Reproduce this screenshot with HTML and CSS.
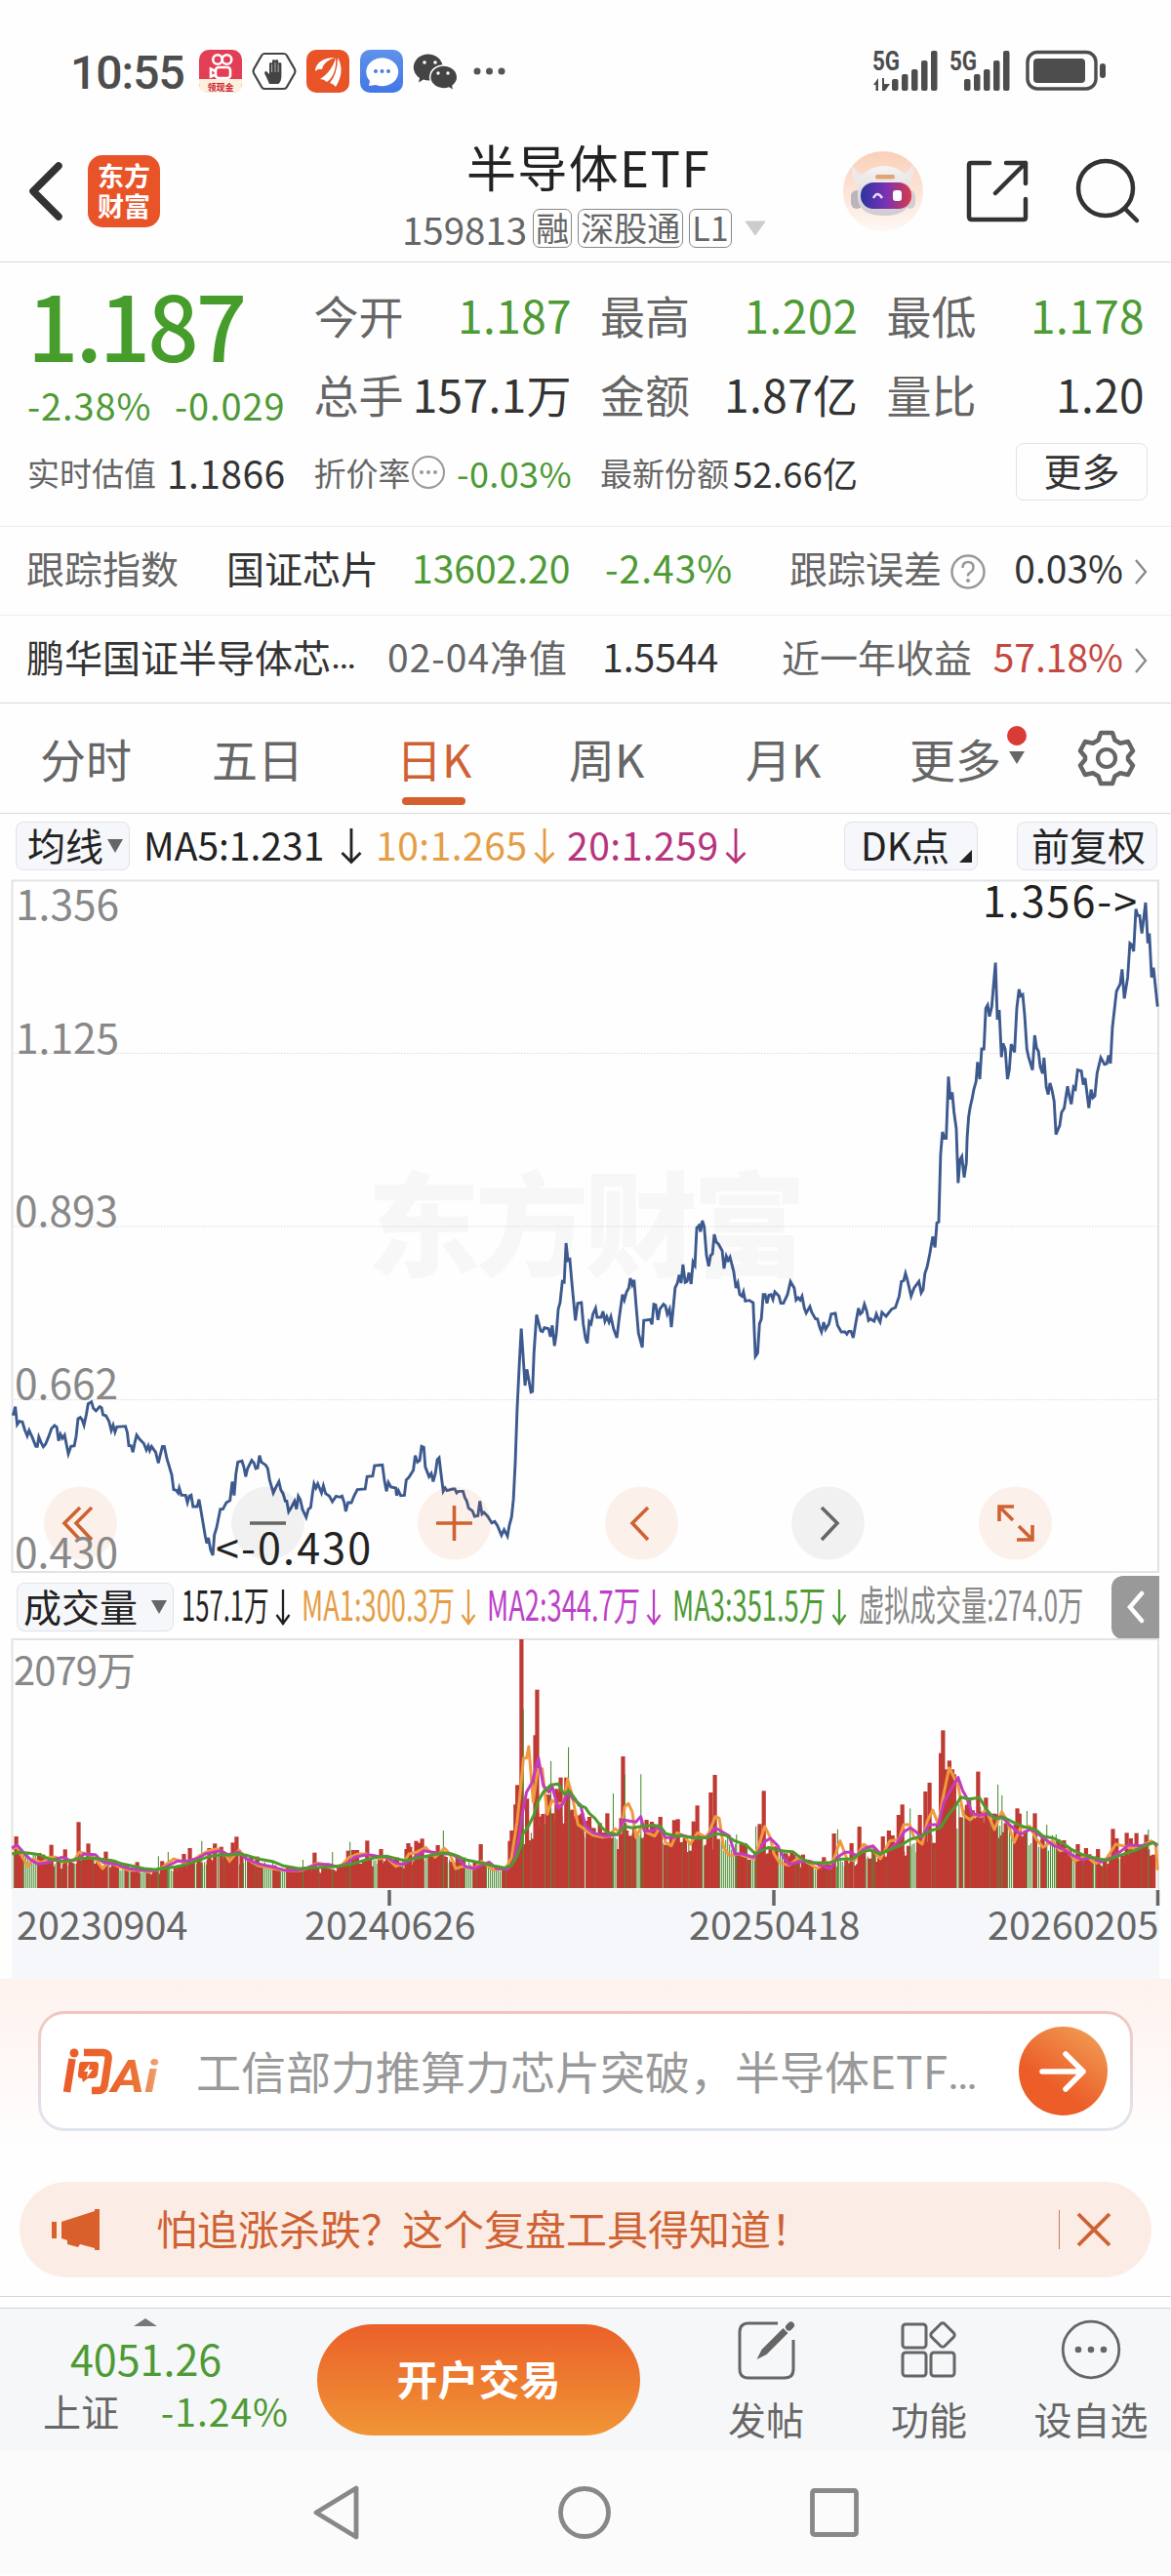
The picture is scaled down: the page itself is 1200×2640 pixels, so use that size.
FILE: index.html
```html
<!DOCTYPE html>
<html lang="zh-CN">
	<head>
		<meta charset="UTF-8">
		<title>半导体ETF</title>
		<link rel="stylesheet" href="styles.css">
	</head>
	<body>
		<div class="status">
			<div class="clock">10:55</div>
			<svg class="apps" width="330" height="50" viewBox="200 48 330 50">
				<defs>
					<linearGradient id="blue" x1="0" y1="0" x2="0" y2="1"><stop offset="0" stop-color="#5e92ea"/><stop offset="1" stop-color="#4377e6"/></linearGradient>
				</defs>
				<rect x="204" y="51" width="44" height="44" rx="10" fill="#e23e55"/>
				<path d="M204 81h44v4q0 10-10 10h-24q-10 0-10-10z" fill="#fdf0dc"/>
				<g fill="none" stroke="#fff" stroke-width="2.6">
					<circle cx="223" cy="61" r="4.8"/><circle cx="232.500" cy="61" r="4.800"/>
					<rect x="221" y="69" width="15" height="11" rx="3"/><path d="M221 73l-5-2.500v8l5-2"/>
				</g>
				<text x="226" y="93" font-size="9" font-weight="700" text-anchor="middle" fill="#c23">领现金</text>
				<path d="M271 55h20q2 0 3 2l8 14q1 2 0 4l-8 14q-1 2-3 2h-20q-2 0-3-2l-8-14q-1-2 0-4l8-14q1-2 3-2z" fill="none" stroke="#444" stroke-width="2.200"/>
				<path d="M276 86q-2-5-5-11q0-2 2-2l3 3V65q1.500-2 3 0v8V62q1.500-2 3 0v11V62q1.700-2 3.200 0v11V65q1.700-2 3.200 0v13q0 5-3 8z" fill="#444"/>
				<path d="M278.600 66v8M282 64v10M285.200 66v8" stroke="#fefefe" stroke-width=".6"/>
				<rect x="314" y="51" width="44" height="44" rx="10" fill="#e95328"/>
				<g fill="#fff">
					<path d="M323 73c0-8 8-14 20-14c-8 3-12 7-13 12q-4-1-7 2z"/>
					<path d="M328 81c8-5 14-13 16-22c1 10-2 20-9 25q-3-3-7-3z"/>
					<path d="M338 85q8-10 8-26q8 14-2 30q-2-3-6-4z"/>
				</g>
				<rect x="369" y="51" width="44" height="44" rx="10" fill="url(#blue)"/>
				<path d="M379 83a16.500 14.500 0 1 1 6 4l-7 1z" fill="#fff"/>
				<g fill="#4a7de6"><circle cx="385" cy="73" r="2"/><circle cx="391.500" cy="73" r="2"/><circle cx="398" cy="73" r="2"/></g>
				<path d="M430 80a15 13.500 0 1 1 10 2.500q-4 0-6-1l-5 3z" fill="#444"/>
				<circle cx="435" cy="64" r="1.800" fill="#fff"/><circle cx="446" cy="64" r="1.800" fill="#fff"/>
				<path d="M464 88a14 12 0 1 0-9 3q3 0 5-1l5 3z" fill="#444" stroke="#fff" stroke-width="1.500"/>
				<circle cx="449" cy="75" r="1.700" fill="#fff"/><circle cx="459" cy="75" r="1.700" fill="#fff"/>
				<g fill="#555"><circle cx="489" cy="73" r="3.500"/><circle cx="501.500" cy="73" r="3.500"/><circle cx="514" cy="73" r="3.500"/></g>
			</svg>
			<svg class="signal" width="250" height="60" viewBox="890 43 250 60" fill="#4d4d4d">
				<text class="net" transform="translate(894 72) scale(.8 1)">5G</text>
				<path d="M895 87l5-7v13h-2.500v-6zM904 80h2v6h6l-5 7h-3z"/>
				<rect x="914" y="81" width="6.500" height="12" rx="2"/><rect x="924" y="76" width="6.500" height="17" rx="2"/><rect x="934" y="71" width="6.500" height="22" rx="2"/><rect x="944" y="62" width="6.500" height="31" rx="2"/><rect x="954" y="52" width="6.500" height="41" rx="2"/>
				<text class="net" transform="translate(973 72) scale(.8 1)">5G</text>
				<rect x="988" y="81" width="6.500" height="12" rx="2"/><rect x="998" y="76" width="6.500" height="17" rx="2"/><rect x="1008" y="71" width="6.500" height="22" rx="2"/><rect x="1018" y="62" width="6.500" height="31" rx="2"/><rect x="1028" y="52" width="6.500" height="41" rx="2"/>
				<rect x="1053" y="53.500" width="70" height="37.500" rx="10" fill="none" stroke="#4d4d4d" stroke-width="3.400"/>
				<rect x="1059" y="60" width="53" height="25" rx="4"/><rect x="1127" y="65" width="6" height="15" rx="3"/>
			</svg>
		</div>

		<div class="header">
			<svg class="back" width="40" height="64" viewBox="27 164 40 64"><path d="M60 170L34 196l26 26" fill="none" stroke="#333" stroke-width="7.500" stroke-linecap="round" stroke-linejoin="round"/></svg>
			<div class="logo">东方<br>财富</div>
			<div class="name">
				<div class="nametop">半导体ETF</div>
				<div class="code">159813<i>融</i><i>深股通</i><i>L1</i><svg width="24" height="16" viewBox="0 0 24 16"><path d="M2 1h20L12 15z" fill="#ccc" stroke="#ccc" stroke-linejoin="round"/></svg></div>
			</div>
			<svg class="tools" width="310" height="90" viewBox="860 151 310 90">
				<defs>
					<linearGradient id="peach" x1="0" y1="0" x2="0" y2="1"><stop offset="0" stop-color="#fad0b8"/><stop offset="1" stop-color="#fef8f4"/></linearGradient>
					<linearGradient id="visor"><stop offset="0" stop-color="#2b349f"/><stop offset=".5" stop-color="#7a32b4"/><stop offset="1" stop-color="#d83a48"/></linearGradient>
					<linearGradient id="helmet" x1="0" y1="0" x2="0" y2="1"><stop offset="0" stop-color="#f6f4f4"/><stop offset="1" stop-color="#cfcacf"/></linearGradient>
				</defs>
				<circle cx="905" cy="196" r="41" fill="url(#peach)"/>
				<path d="M874 169q-4 14 6 20l7-10q-10 0-13-10zM935 168q4 14-6 21l-7-10q11-2 13-11z" fill="#eee8e9"/>
				<rect x="872" y="195" width="12" height="19" rx="6" fill="#b9b5ba"/><rect x="927" y="195" width="11" height="19" rx="6" fill="#d2cdd2"/>
				<path d="M879 205q-2-34 27-35q29 1 27 35q-3 16-27 16t-27-16z" fill="url(#helmet)"/>
				<rect x="897" y="179" width="20" height="4.500" rx="2" fill="#dfa673"/>
				<rect x="882" y="187" width="52" height="27" rx="13" fill="url(#visor)"/>
				<path d="M895 203q4-8 9 0" fill="none" stroke="#e9d8ff" stroke-width="2.500"/><rect x="915" y="195" width="9" height="11" rx="3" fill="#fff"/>
				<g fill="none" stroke="#333" stroke-width="4.500" stroke-linecap="round" stroke-linejoin="round">
					<path d="M1014 167h-19q-2 0-2 2v53q0 3 3 3h53q2 0 2-2v-19M1031 167h20v21M1051 167l-31 31"/>
					<circle cx="1133" cy="193" r="28"/><path d="M1153 214l12 12"/>
				</g>
			</svg>
		</div>

		<div class="quote">
			<div class="col">
				<div class="price">1.187</div>
				<div class="change"><span>-2.38%</span><span>-0.029</span></div>
				<div class="cell small"><label>实时估值</label><b class="n39">1.1866</b></div>
			</div>
			<div class="col">
				<div class="cell"><label>今开</label><b class="down">1.187</b></div>
				<div class="cell"><label>总手</label><b>157.1万</b></div>
				<div class="cell small"><label>折价率<svg width="36" height="36" viewBox="0 0 36 36"><circle cx="18" cy="18" r="16" fill="none" stroke="#999" stroke-width="2"/><g fill="#999"><circle cx="11" cy="18" r="2"/><circle cx="18" cy="18" r="2"/><circle cx="25" cy="18" r="2"/></g></svg></label><b class="down">-0.03%</b></div>
			</div>
			<div class="col">
				<div class="cell"><label>最高</label><b class="down">1.202</b></div>
				<div class="cell"><label>金额</label><b>1.87亿</b></div>
				<div class="cell small"><label>最新份额</label><b>52.66亿</b></div>
			</div>
			<div class="col">
				<div class="cell"><label>最低</label><b class="down">1.178</b></div>
				<div class="cell"><label>量比</label><b>1.20</b></div>
				<div class="cell last"><div class="morebtn">更多</div></div>
			</div>
		</div>

		<div class="index row1">
			<span class="grey">跟踪指数</span><span>国证芯片</span><span class="down">13602.20</span><span class="down sp">-2.43%</span>
			<span class="grey">跟踪误差<svg width="38" height="38" viewBox="0 0 38 38"><circle cx="19" cy="19" r="16.500" fill="none" stroke="#999" stroke-width="2.500"/><path d="M13.500 15q0-6 5.500-6t5.500 5.500q0 3-3 5t-2.500 4" fill="none" stroke="#999" stroke-width="2.500"/><circle cx="19" cy="28" r="2" fill="#999"/></svg></span>
			<span class="end">0.03%</span>
			<svg width="14" height="28" viewBox="0 0 14 28"><path d="M2 2l10 12L2 26" fill="none" stroke="#888" stroke-width="2.300"/></svg>
		</div>
		<div class="index row2">
			<span>鹏华国证半导体芯<u>…</u></span><span class="grey sp">02-04净值</span><span>1.5544</span><span class="grey">近一年收益</span><span class="end up">57.18%</span>
			<svg width="14" height="28" viewBox="0 0 14 28"><path d="M2 2l10 12L2 26" fill="none" stroke="#888" stroke-width="2.300"/></svg>
		</div>

		<div class="tabs">
			<div>分时</div><div>五日</div><div class="on">日K</div><div>周K</div><div>月K</div>
			<div class="moretab">更多<em></em><s></s></div>
			<svg width="60" height="68" viewBox="-30 -34 60 68"><path fill="none" stroke="#666" stroke-width="4.500" stroke-linejoin="round" d="M-6-26h12l2.500 7.500l5.500 3.200l8-1.700l5 9.500l-5 6v3l5 6l-5 9.500l-8-1.700l-5.500 3.200l-2.500 7.500h-12l-2.500-7.500l-5.500-3.200l-8 1.700l-5-9.500l5-6v-3l-5-6l5-9.500l8 1.700l5.500-3.200z"/><circle cy="0" r="9" fill="none" stroke="#666" stroke-width="4.200"/></svg>
		</div>

		<div class="maline">
			<div class="chip">均线<svg width="16" height="14"><path d="M0 0h16L8 14z" fill="#666"/></svg></div>
			<span class="ma5">MA5:1.231</span><svg class="arr" width="22" height="38" viewBox="0 0 22 38"><path d="M11 1v34M1.500 26l9.500 9.500l9.500-9.500" fill="none" stroke="#222" stroke-width="2.800"/></svg>
			<span class="ma10">10:1.265</span><svg class="arr" width="22" height="38" viewBox="0 0 22 38"><path d="M11 1v34M1.500 26l9.500 9.500l9.500-9.500" fill="none" stroke="#e59d45" stroke-width="2.800"/></svg>
			<span class="ma20">20:1.259</span><svg class="arr" width="22" height="38" viewBox="0 0 22 38"><path d="M11 1v34M1.500 26l9.500 9.500l9.500-9.500" fill="none" stroke="#b7347c" stroke-width="2.800"/></svg>
			<div class="chip dk">DK点<svg width="13" height="13"><path d="M13 0v13H0z" fill="#222"/></svg></div>
			<div class="chip fq">前复权</div>
		</div>

		<svg class="kchart" width="1200" height="716" viewBox="0 900 1200 716">
			<text class="mark" x="376" y="1299" textLength="450">东方财富</text>
			<path d="M12 1079.500H1188M12 1257H1188M12 1434.500H1188" stroke="#dcdcdc" stroke-width="1.200" stroke-dasharray="1.500 1.500"/>
			<path d="M12.500 902.500H1187V1611H12.500z" fill="none" stroke="#e3e3e5" stroke-width="2"/>
			<g class="axis"><text x="16" y="943">1.356</text><text x="16" y="1080">1.125</text><text x="15" y="1257">0.893</text><text x="15" y="1434">0.662</text></g>
			<g id="closeline" class="closeline" transform="translate(0 1170) scale(.38265 .33333)"></g>
			<g fill="#ee6a20" fill-opacity=".09"><circle cx="82.500" cy="1561" r="37.500"/><circle cx="465.500" cy="1561" r="37.500"/><circle cx="657.500" cy="1561" r="37.500"/><circle cx="1040.500" cy="1561" r="37.500"/></g>
			<g fill="#000" fill-opacity=".05"><circle cx="274.500" cy="1561" r="37.500"/><circle cx="848.500" cy="1561" r="37.500"/></g>
			<g fill="none" stroke="#cf6233" stroke-width="3.600">
				<path d="M82 1545l-16 16l16 17M94 1545l-16 16l16 17M465.500 1543v36M447 1561h37M664 1545l-16 16l16 17"/>
				<path d="M1024 1559v-15h15M1024 1544l14 14M1058 1563v15h-16M1058 1578l-14-14"/>
			</g>
			<path d="M256 1561h37M842 1545l16 16l-16 17" fill="none" stroke="#666" stroke-width="3.600"/>
			<text class="axis" x="15" y="1607">0.430</text>
			<g class="peak"><text x="1007" y="940" textLength="158">1.356-&gt;</text><text x="221" y="1603" textLength="159">&lt;-0.430</text></g>
		</svg>

		<div class="volhead">
			<div class="chip">成交量<svg width="16" height="14"><path d="M0 0h16L8 14z" fill="#666"/></svg></div>
			<svg class="volma" width="930" height="62" viewBox="185 1614 930 62">
				<text fill="#222" transform="translate(186 1659) scale(.61 1)">157.1万</text>
				<text fill="#e59d45" transform="translate(309 1659) scale(.65 1)">MA1:300.3万</text>
				<text fill="#bd40c8" transform="translate(499 1659) scale(.65 1)">MA2:344.7万</text>
				<text fill="#4e9a35" transform="translate(689 1659) scale(.65 1)">MA3:351.5万</text>
				<text fill="#888" transform="translate(880 1659) scale(.625 1)">虚拟成交量:274.0万</text>
				<g fill="none" stroke-width="2.300">
					<path d="M290 1627v36M283.500 1653l6.500 9l6.500-9" stroke="#222"/>
					<path d="M480 1627v36M473.500 1653l6.500 9l6.500-9" stroke="#e59d45"/>
					<path d="M670 1627v36M663.500 1653l6.500 9l6.500-9" stroke="#bd40c8"/>
					<path d="M860 1627v36M853.500 1653l6.500 9l6.500-9" stroke="#4e9a35"/>
				</g>
			</svg>
			<div class="fold"><svg width="20" height="34" viewBox="0 0 20 34"><path d="M16 3L4 17l12 14" fill="none" stroke="#fff" stroke-width="4.500" stroke-linecap="round"/></svg></div>
		</div>

		<svg class="vchart" width="1200" height="350" viewBox="0 1678 1200 350">
			<rect x="12" y="1936" width="1176" height="92" fill="#f6f7fa"/>
			<path d="M12.500 1936V1680H1187V1936" fill="none" stroke="#e3e3e5" stroke-width="2"/>
			<text class="vmax" x="14" y="1727" textLength="125">2079万</text>
			<g id="volume" transform="translate(0 1670) scale(.38265 .33333)"></g>
			<path d="M399 1937v16M793 1937v16M1186.500 1937v16" stroke="#666" stroke-width="3.500"/>
			<g class="dates"><text x="17" y="1988">20230904</text><text x="312" y="1988">20240626</text><text x="706" y="1988">20250418</text><text x="1012" y="1988">20260205</text></g>
		</svg>

		<div class="ai">
			<div class="aibox">
				<svg width="110" height="60" viewBox="62 2093 110 60">
					<defs>
						<linearGradient id="org" x1="62" x2="172" y1="0" y2="0" gradientUnits="userSpaceOnUse"><stop offset="0" stop-color="#ea5a28"/><stop offset=".6" stop-color="#ec6a30"/><stop offset="1" stop-color="#eea77c"/></linearGradient>
						<linearGradient id="org2"><stop offset="0" stop-color="#ea5f2a"/><stop offset=".6" stop-color="#ec7638"/><stop offset="1" stop-color="#eea77c"/></linearGradient>
					</defs>
					<path d="M74 2110l-5.500 34M86 2103.500h19q7 0 6 7l-4 27q-1 5-6 5h-7" fill="none" stroke="url(#org)" stroke-width="7.500"/>
					<circle cx="76" cy="2104" r="4.500" fill="url(#org)"/>
					<path d="M84 2113h13q5 0 4 5l-1 8q-1 4-5 4h-5l-5 4l-1-4q-5 0-4-5l1-8q0-4 3-4z" fill="url(#org)"/>
					<path d="M92 2115l-6 8h4l-1 6l6-8h-4z" fill="#fff"/>
					<text class="ailogo" transform="translate(114 2144) scale(1.14 1)" fill="url(#org2)">Ai</text>
				</svg>
				<p>工信部力推算力芯片突破，半导体ETF<u>…</u></p>
				<div class="go"><svg width="50" height="44" viewBox="0 0 50 44"><path d="M3 22h42M27 4l18 18l-18 18" fill="none" stroke="#fff" stroke-width="5.500" stroke-linecap="round" stroke-linejoin="round"/></svg></div>
			</div>
		</div>

		<div class="notice">
			<svg width="50" height="44" viewBox="53 2263 50 44" fill="#d9602a"><path d="M53 2277h5v17h-5zM63 2277l34-11v-2h5v42h-5v-2l-15-4l-2 3l-11-3v-4l-6-2z"/></svg>
			<p>怕追涨杀跌？这个复盘工具得知道！</p>
			<div class="close"><svg width="36" height="36" viewBox="0 0 36 36"><path d="M2 2l32 32M34 2L2 34" stroke="#cf6233" stroke-width="3.800"/></svg></div>
		</div>

		<div class="bar">
			<div class="sh">
				<svg width="24" height="8"><path d="M0 8L12 0l12 8z" fill="#777"/></svg>
				<div class="shnum">4051.26</div>
				<div class="shrow"><span>上证</span><span class="down sp">-1.24%</span></div>
			</div>
			<div class="open">开户交易</div>
			<div class="item"><svg width="62" height="62" viewBox="754 2377 62 62" fill="none" stroke="#666" stroke-width="3"><path d="M797 2381h-30q-9 0-9 9v38q0 9 9 9h37q9 0 9-9v-30"/><path d="M808.500 2385l2-2" stroke-width="7" stroke-linecap="round"/><path d="M802.500 2386l5 5l-22 22l-10 5l5-10z" fill="#666" stroke="none"/></svg><span>发帖</span></div>
			<div class="item"><svg width="62" height="62" viewBox="921 2377 62 62" fill="none" stroke="#666" stroke-width="3"><rect x="925" y="2382" width="24" height="24" rx="3"/><rect x="925" y="2411" width="24" height="24" rx="3"/><rect x="954" y="2411" width="24" height="24" rx="3"/><rect x="956.500" y="2383.500" width="19" height="19" rx="3" transform="rotate(45 966 2393)"/></svg><span>功能</span></div>
			<div class="item wide"><svg width="62" height="62" viewBox="0 0 62 62"><circle cx="31" cy="31" r="28.800" fill="none" stroke="#666" stroke-width="2.800"/><g fill="#666"><circle cx="18" cy="31" r="3.300"/><circle cx="31" cy="31" r="3.300"/><circle cx="44" cy="31" r="3.300"/></g></svg><span>设自选</span></div>
		</div>

		<div class="sysnav">
			<svg width="48" height="56" viewBox="0 0 48 56"><path d="M44 3v50L3 28z" fill="none" stroke="#888" stroke-width="4.800" stroke-linejoin="round"/></svg>
			<svg width="56" height="56" viewBox="0 0 56 56"><circle cx="28" cy="28" r="24.500" fill="none" stroke="#888" stroke-width="4.800"/></svg>
			<svg width="52" height="52" viewBox="0 0 52 52"><rect x="3.500" y="3.500" width="45" height="45" rx="2" fill="none" stroke="#888" stroke-width="4.800"/></svg>
		</div>
		<script src="chart.js"></script>
	</body>
</html>
```

FILE: styles.css
```css
body{
	margin: 0;
	width: 1200px;
	background: #fefefe;
	color: #333;
	font-family: "Noto Sans CJK SC","Noto Sans",sans-serif;
	font-size: 39px;
	white-space: nowrap;
}
svg{
	display: block;
	flex: none;
}
p{
	margin: 0;
}
i,b{
	font-style: normal;
	font-weight: 400;
}
u{
	font-family: Roboto,sans-serif;
	text-decoration: none;
}
.down{
	color: #4e9a35;
}
.up{
	color: #c4483f;
}
.grey{
	color: #666;
}
.sp{
	letter-spacing: 1px;
}

/* 状态栏 */
.status{
	display: flex;
	align-items: center;
	height: 146px;
	box-sizing: border-box;
	padding-left: 72px;
}
.clock{
	width: 128px;
	font-family: Roboto,sans-serif;
	font-size: 48px;
	font-weight: 500;
	letter-spacing: -1px;
	color: #4d4d4d;
	padding-top: 2px;
}
.signal{
	margin-left: 360px;
}
.apps text{
	font-family: "Noto Sans CJK SC",sans-serif;
}
.net{
	font-family: Roboto,sans-serif;
	font-size: 28px;
	font-weight: 700;
}

/* 标题栏 */
.header{
	display: flex;
	align-items: center;
	height: 122px;
	padding-left: 27px;
	border-bottom: 1px solid #d8d8d8;
}
.back,.logo,.tools{
	margin-bottom: 22px;
}
.logo{
	width: 74px;
	height: 74px;
	margin-left: 23px;
	box-sizing: border-box;
	padding-top: 5px;
	border-radius: 15px;
	background: #e95328;
	color: #fff;
	font-size: 27px;
	line-height: 31px;
	font-weight: 700;
	text-align: center;
}
.name{
	width: 470px;
	margin-left: 205px;
	margin-bottom: 23px;
	text-align: center;
}
.nametop{
	font-size: 51px;
	line-height: 66px;
	letter-spacing: 1.4px;
	color: #222;
	margin-right: 1px;
	margin-left: -1px;
}
.code{
	display: flex;
	align-items: center;
	height: 42px;
	margin: 10px 0 0 43px;
	font-size: 38.5px;
	line-height: 42px;
	color: #666;
}
.code i{
	height: 38px;
	margin-left: 6px;
	padding: 0 2px;
	border: 1px solid #888;
	border-radius: 7px;
	font-size: 34px;
	line-height: 35px;
}
.code svg{
	margin-left: 12px;
}
.tools{
	margin-left: 21px;
}

/* 行情 */
.quote{
	display: grid;
	grid-template-columns: repeat(4,264.5px);
	column-gap: 29px;
	height: 271px;
	padding: 12px 27px 0 28px;
	box-sizing: border-box;
	border-bottom: 1px solid #eee;
}
.cell{
	display: flex;
	align-items: center;
	justify-content: space-between;
	height: 81px;
	font-size: 46px;
}
.cell label{
	display: flex;
	align-items: center;
	color: #666;
}
.cell b{
	letter-spacing: .4px;
}
.small{
	font-size: 36px;
}
.small label{
	font-size: 33px;
}
.small .n39{
	font-size: 39px;
}
.price{
	height: 105px;
	line-height: 99px;
	font-size: 92px;
	font-weight: 500;
	color: #479d2c;
	letter-spacing: -3px;
}
.change{
	display: flex;
	justify-content: space-between;
	height: 57px;
	line-height: 57px;
	font-size: 38px;
	letter-spacing: .9px;
	color: #4e9a35;
}
.cell.last{
	justify-content: flex-end;
	margin-right: -3px;
}
.morebtn{
	width: 133px;
	height: 57px;
	border: 1px solid #e2e2e2;
	border-radius: 8px;
	font-size: 39px;
	line-height: 52px;
	text-align: center;
}

/* 指数、净值 */
.index{
	display: grid;
	align-items: center;
	height: 82px;
	padding-left: 27px;
	padding-bottom: 8px;
	border-bottom: 1px solid #eee;
	line-height: 82px;
}
.index span{
	display: flex;
	align-items: center;
	height: 82px;
}
.index svg{
	margin-left: 8px;
	margin-top: 10px;
}
.index .end{
	justify-content: flex-end;
}
.index > svg{
	margin-left: 11px;
}
.row1{
	grid-template-columns: 205px 190px 198px 189px 223px 119px 30px;
}
.row2{
	grid-template-columns: 370px 220px 184px 215px 135px 30px;
	height: 81px;
	border-color: #d8d8d8;
}

/* 周期 */
.tabs{
	display: grid;
	grid-template-columns: 176px 189px 177px 181px 168px 172px 80px;
	align-items: center;
	height: 112px;
	padding-left: 41px;
	border-bottom: 1px solid #d8d8d8;
	font-size: 47px;
	color: #666;
}
.tabs > div{
	position: relative;
	line-height: 104px;
}
.tabs .on{
	color: #cf6233;
}
.tabs .on:after{
	content: "";
	position: absolute;
	left: 6px;
	bottom: 4px;
	width: 65px;
	height: 8px;
	border-radius: 4px;
	background: #d5602d;
}
.moretab em{
	position: absolute;
	left: 100px;
	top: 19px;
	width: 20px;
	height: 20px;
	border-radius: 50%;
	background: #db3b35;
}
.moretab s{
	position: absolute;
	left: 102px;
	top: 45px;
	border: 8px solid transparent;
	border-top: 13px solid #666;
	border-bottom: 0;
}

/* 均线 */
.maline{
	display: flex;
	align-items: center;
	height: 66px;
	padding-left: 16px;
	line-height: 60px;
}
.chip{
	display: flex;
	align-items: center;
	width: 104px;
	height: 48px;
	padding-left: 11px;
	background: #f6f7fa;
	border: 1px solid #e2e3e8;
	border-radius: 8px;
	color: #222;
	line-height: 40px;
	box-sizing: content-box;
}
.maline .chip,.volhead .chip{
	height: 43px;
	padding-bottom: 5px;
}
.chip svg{
	margin-left: 4px;
	margin-top: 4px;
}
.maline .arr{
	margin-left: 14px;
}
.maline span{
	width: 188px;
	height: 64px;
	margin-left: 14px;
	color: #222;
}
.maline .ma10{
	width: 154px;
	letter-spacing: .5px;
	color: #e59d45;
}
.maline .ma20{
	width: 154px;
	margin-left: 12px;
	letter-spacing: .5px;
	color: #b7347c;
}
.maline .ma10 + .arr,.maline .ma20 + .arr{
	margin-left: 8px;
}
.maline .dk{
	width: 119px;
	padding-left: 16px;
	margin-left: 100px;
}
.maline .dk svg{
	margin: 26px 0 0 10px;
}
.maline .fq{
	width: 128px;
	padding-left: 14px;
	margin-left: 40px;
}

/* K线 */
.kchart text,.vchart text,.volma text{
	font-family: "Noto Sans CJK SC",sans-serif;
}
.mark{
	font-size: 116px;
	font-weight: 900;
	fill: #f7f7f7;
}
.axis{
	font-size: 42.5px;
	fill: #888;
}
.peak{
	font-size: 43px;
	fill: #222;
}
.closeline polyline{
	fill: none;
	stroke: #3d5a8f;
	stroke-width: 2.9px;
	vector-effect: non-scaling-stroke;
}

/* 成交量 */
.volhead{
	display: flex;
	align-items: center;
	height: 62px;
	padding-left: 17px;
}
.volhead .chip{
	width: 153px;
	padding-left: 6px;
}
.volhead .chip svg{
	margin-left: 14px;
}
.volma{
	margin-left: 7px;
}
.volma text{
	font-size: 42px;
}
.fold{
	display: flex;
	align-items: center;
	justify-content: center;
	width: 49px;
	height: 65px;
	margin-left: 24px;
	border-radius: 12px 0 0 12px;
	background: #999;
}
.vmax{
	font-size: 40px;
	fill: #888;
}
.dates{
	font-size: 39.5px;
	fill: #666;
}
#volume polyline{
	fill: none;
	stroke-width: 3px;
	stroke-linejoin: round;
	vector-effect: non-scaling-stroke;
}

/* 问AI */
.ai{
	height: 208px;
	padding: 33px 39px 0;
	box-sizing: border-box;
	background: linear-gradient(#fef2ee,#fefefe 85%);
}
.aibox{
	display: flex;
	align-items: center;
	height: 117px;
	padding-left: 20px;
	border: 3px solid transparent;
	border-radius: 27px;
	background: linear-gradient(#fff,#fff) padding-box,linear-gradient(#f0c6be,#e4dfea 80%,#dfe6ef) border-box;
}
.aibox p{
	width: 802px;
	margin-left: 29px;
	padding-bottom: 4px;
	font-size: 46px;
	color: #999;
}
.ailogo{
	font-family: Roboto,sans-serif;
	font-size: 46px;
	font-style: italic;
	font-weight: 700;
}
.go{
	display: flex;
	align-items: center;
	justify-content: center;
	width: 91px;
	height: 91px;
	margin-left: 41px;
	border-radius: 50%;
	background: linear-gradient(35deg,#ec5d28 35%,#f0944e 85%);
}

.notice{
	display: flex;
	align-items: center;
	height: 98px;
	margin: 0 20px;
	padding-left: 33px;
	border-radius: 49px;
	background: #fbede5;
}
.notice p{
	width: 862px;
	margin-left: 57px;
	padding-bottom: 5px;
	font-size: 42px;
	color: #cf6233;
}
.close{
	margin-left: 63px;
	padding: 2px 0 2px 17px;
	border-left: 1px solid #c97c57;
}

/* 底部 */
.bar{
	display: flex;
	height: 146px;
	margin-top: 31px;
	border-top: 1px solid #d5d5d5;
	background: #f6f7f9;
	box-shadow: 0 -11px 0 #fefefe,0 -12px 0 #d5d5d5;
}
.sh{
	width: 252px;
	margin-left: 44px;
}
.sh svg{
	margin: 10px 0 0 93px;
}
.shnum{
	margin-left: 28px;
	font-size: 43px;
	line-height: 58px;
	color: #4e9a35;
	padding-top: 3px;
}
.shrow{
	display: flex;
	justify-content: space-between;
	line-height: 50px;
	color: #666;
}
.open{
	width: 331px;
	height: 114px;
	margin: 16px 0 0 29px;
	border-radius: 57px;
	background: linear-gradient(#eb602a,#f09535);
	color: #fff;
	font-size: 42px;
	font-weight: 700;
	line-height: 110px;
	text-align: center;
}
.item{
	display: flex;
	flex-direction: column;
	align-items: center;
	width: 80px;
	margin-left: 89px;
	padding-top: 11px;
	color: #666;
}
.item + .item{
	margin-left: 87px;
}
.item span{
	line-height: 60px;
	margin-top: 9px;
}
.item.wide{
	width: 120px;
	margin-left: 66px;
}
.sysnav{
	display: flex;
	align-items: center;
	height: 126px;
	padding-left: 321px;
	background: #fbfbfc;
}
.sysnav svg + svg{
	margin-left: 202px;
}
```

FILE: chart.js
```js
var HALF = 1568; // 数据分左右两段，右段整体平移

// 收盘价
var closeL = "32,838 36,838 41,815 46,870 52,860 60,862 66,885 73,905 78,888 86,908 96,937 100,937 104,908 110,925 116,938 122,930 130,908 138,882 146,873 152,878 157,920 162,900 167,912 173,902 183,960 190,937 199,935 204,905 209,852 215,848 220,855 225,872 231,840 236,806 245,800 250,820 257,828 267,815 272,818 276,840 284,843 292,860 298,888 303,872 308,893 313,877 336,875 341,895 345,935 351,935 356,955 361,925 366,902 374,915 385,928 392,948 397,935 401,950 406,937 417,955 424,988 431,955 435,937 440,937 447,975 460,1025 465,1070 472,1072 477,1080 480,1065 486,1087 497,1087 502,1110 507,1090 512,1087 517,1122 528,1122 533,1100 539,1140 550,1215 554,1235 558,1218 564,1255 570,1272 574,1210 580,1187 590,1130 597,1130 606,1110 616,1103 622,1045 627,1088 632,1020 637,985 648,982 653,1000 658,1030 663,1005 674,980 680,988 685,1005 690,1003 695,965 700,985 712,995 717,1005 722,1040 732,1080 738,1065 747,1045 752,1070 758,1082 764,1105 768,1105 773,1138 780,1125 789,1105 794,1130 799,1090 804,1100 810,1130 820,1155 826,1130 832,1125 837,1080 841,1052 846,1065 851,1052 861,1080 866,1058 872,1082 882,1090 890,1107 900,1090 910,1093 916,1090 922,1110 926,1137 932,1110 941,1110 948,1090 957,1070 978,1068 983,1030 998,1028 1003,996 1024,994 1030,1045 1035,1075 1040,1048 1047,1062 1060,1065 1062,1088 1067,1073 1073,1088 1083,1087 1088,1040 1095,1032 1107,1010 1112,965 1118,985 1124,980 1129,937 1135,940 1139,1000 1149,1030 1155,1020 1160,1045 1166,1020 1171,978 1176,972 1181,1020 1187,1075 1192,1065 1197,1073 1212,1068 1218,1068 1223,1080 1228,1075 1240,1075 1245,1095 1250,1105 1255,1127 1265,1135 1271,1152 1280,1150 1285,1105 1291,1145 1296,1140 1306,1152 1317,1172 1325,1168 1332,1180 1343,1210 1350,1193 1359,1213 1364,1180 1370,1155 1375,1100 1380,985 1385,820 1391,680 1396,575 1401,660 1406,750 1411,700 1422,770 1426,768 1430,650 1437,532 1443,560 1448,582 1453,584 1458,572 1469,575 1474,600 1479,565 1485,628 1490,590 1495,515 1500,495 1506,430 1511,432 1516,312 1521,365 1526,362 1532,440 1541,550 1547,497 1557,495 1562,560 1568,605";
var closeR = "0,605 5,620 10,553 15,560 20,530 27,512 31,540 42,540 47,522 52,552 57,538 63,555 68,538 75,575 84,603 90,545 99,470 104,487 110,462 116,450 120,420 125,440 130,425 136,510 142,590 152,633 156,550 173,547 178,562 183,500 188,502 194,548 199,515 209,500 214,505 219,530 225,515 230,570 236,500 240,450 246,435 251,410 256,435 261,378 267,433 272,430 277,403 283,438 288,370 293,380 298,265 304,258 308,277 313,243 318,262 324,350 330,383 335,350 340,345 345,285 350,308 356,315 366,335 371,390 377,352 382,365 387,355 397,400 403,450 408,435 413,470 419,475 423,462 428,490 439,488 449,495 455,660 461,650 466,560 471,545 476,470 481,470 486,497 491,472 497,470 502,485 507,462 518,475 523,497 530,497 541,470 549,430 559,450 564,487 570,480 575,487 580,475 586,512 591,527 601,507 606,525 616,545 621,545 627,570 632,585 638,555 643,577 652,560 658,530 669,528 675,565 685,585 695,585 700,592 705,583 711,583 717,603 722,570 731,512 736,530 741,525 747,500 753,520 758,550 763,545 773,552 779,530 784,545 789,555 794,525 805,537 820,515 830,510 840,475 846,430 852,428 857,405 862,425 872,475 880,450 893,430 899,465 904,455 909,405 915,385 922,345 930,292 936,325 941,250 946,247 951,40 956,-30 961,-10 966,-10 972,-200 977,-130 982,-152 987,-90 993,-40 998,127 1003,55 1008,45 1014,110 1020,65 1022,-10 1026,-75 1030,-105 1035,-130 1040,-160 1046,-185 1050,-245 1056,-192 1061,-285 1067,-285 1072,-410 1077,-420 1082,-385 1088,-415 1092,-470 1098,-550 1103,-375 1108,-405 1114,-260 1118,-302 1124,-285 1130,-192 1135,-220 1140,-300 1149,-275 1155,-410 1161,-468 1166,-448 1171,-452 1176,-390 1182,-285 1187,-258 1197,-220 1203,-327 1208,-288 1213,-278 1218,-230 1224,-210 1228,-258 1234,-168 1239,-145 1244,-180 1249,-160 1255,-125 1260,-22 1270,-50 1275,-90 1282,-103 1291,-170 1296,-140 1301,-115 1307,-168 1312,-162 1318,-220 1328,-217 1333,-175 1338,-195 1348,-103 1354,-160 1359,-135 1364,-140 1370,-210 1380,-258 1390,-238 1396,-240 1401,-265 1406,-240 1411,-350 1422,-462 1432,-485 1437,-530 1443,-440 1452,-505 1458,-610 1463,-605 1468,-585 1474,-715 1479,-695 1484,-695 1490,-640 1500,-735 1506,-610 1510,-640 1516,-505 1521,-535 1532,-415";

// 成交量均线
var ma1L = "32,675 45,668 55,690 75,728 90,705 110,718 135,700 150,700 165,715 185,712 200,708 212,685 235,690 255,705 275,735 290,715 320,730 345,740 375,740 400,745 430,735 465,705 490,715 510,715 535,695 560,680 580,675 600,685 615,712 640,678 660,705 690,725 730,735 770,742 810,740 850,718 870,722 890,730 915,725 935,700 960,690 980,690 995,695 1015,705 1035,700 1060,728 1080,720 1095,690 1115,685 1140,670 1165,700 1190,672 1205,690 1220,735 1240,728 1270,735 1290,712 1320,740 1355,735 1370,700 1385,590 1395,480 1402,395 1410,395 1416,360 1428,530 1440,430 1452,428 1466,568 1478,525 1490,535 1510,535 1520,460 1530,500 1548,600 1567,615";
var ma1R = "0,618 20,632 45,638 65,635 78,612 95,625 105,545 115,535 125,560 135,640 150,605 165,625 185,635 200,608 215,655 230,665 245,625 265,635 280,660 300,625 325,640 348,575 358,580 370,670 385,695 410,690 435,700 450,705 465,660 480,605 495,640 505,690 520,718 545,725 570,702 600,720 620,735 645,715 660,722 682,650 700,705 720,710 745,660 765,675 790,705 815,650 840,645 852,600 868,600 880,640 902,660 915,590 930,555 945,600 955,530 974,425 985,450 998,480 1012,570 1030,585 1045,570 1060,575 1072,550 1095,615 1115,560 1130,590 1148,655 1165,610 1190,605 1205,640 1225,670 1250,650 1270,680 1290,675 1310,712 1340,695 1365,720 1395,705 1420,660 1440,665 1460,672 1490,665 1515,650 1527,660 1532,740";
var ma2L = "32,672 45,662 55,675 70,695 85,710 100,720 125,718 150,705 170,700 190,712 210,705 225,690 255,692 275,715 310,722 345,735 380,740 410,742 440,732 475,712 500,712 530,703 550,690 590,680 610,692 640,685 660,705 690,720 730,730 770,742 810,738 850,722 880,722 905,730 930,718 950,700 985,692 1010,697 1035,700 1060,718 1080,722 1105,705 1135,680 1160,685 1190,690 1210,690 1230,705 1245,728 1270,735 1290,725 1310,715 1330,735 1360,737 1375,715 1390,640 1400,560 1410,500 1425,470 1442,395 1455,480 1470,500 1478,480 1495,550 1508,535 1520,500 1535,520 1555,540 1567,600";
var ma2R = "0,605 20,625 50,635 90,630 100,585 125,590 135,592 148,575 158,620 180,618 195,608 215,640 235,640 255,632 285,640 325,640 348,610 370,625 385,635 400,690 420,690 450,700 465,680 480,652 495,642 515,665 530,700 545,722 570,715 600,712 630,725 655,735 675,700 695,685 710,685 725,695 750,672 770,665 790,690 815,675 835,655 855,620 870,610 885,622 900,640 920,600 945,600 960,530 980,490 998,455 1010,495 1022,520 1035,565 1055,572 1075,565 1100,580 1115,575 1135,600 1150,615 1165,630 1190,615 1205,622 1225,640 1255,665 1280,675 1305,695 1330,708 1355,700 1380,715 1410,700 1430,685 1455,662 1490,665 1520,655 1532,665";
var ma3L = "32,690 50,685 80,688 105,692 130,705 160,712 185,712 205,705 240,702 270,706 300,710 325,720 360,728 385,735 415,738 440,734 470,730 500,722 530,710 560,698 590,692 615,694 635,690 660,694 690,705 730,713 760,727 800,735 850,732 900,728 940,722 980,708 1010,700 1035,697 1060,704 1085,711 1110,704 1150,695 1190,686 1220,694 1250,709 1290,718 1315,725 1350,733 1370,725 1385,695 1395,665 1400,630 1415,605 1430,570 1440,530 1455,500 1475,478 1495,475 1510,505 1525,497 1540,520 1550,540 1567,547";
var ma3R = "0,548 10,565 25,580 45,610 60,625 85,630 105,605 125,610 150,605 175,602 200,604 215,628 235,633 260,635 300,642 325,640 350,628 375,632 400,650 430,662 455,690 475,678 490,670 520,680 555,683 580,705 600,716 650,718 680,706 715,706 740,685 760,678 790,690 820,675 845,663 870,645 900,635 925,618 950,610 975,565 990,545 1005,515 1025,522 1055,517 1075,555 1095,582 1120,578 1150,595 1175,607 1205,615 1225,635 1255,642 1280,658 1300,675 1330,692 1365,703 1395,710 1430,695 1470,680 1500,665 1520,655 1532,662";

// 放量的日子
var upL = "43,636 137,662 174,676 210,592 236,658 283,683 367,715 434,712 492,690 508,672 560,672 575,658 592,668 623,655 633,637 842,686 932,680 945,678 956,678 983,649 1020,675 1088,675 1093,657 1098,668 1114,650 1122,656 1130,643 1172,663 1287,660 1365,650 1370,618 1375,618 1380,538 1385,478 1391,520 1396,30 1411,520 1433,325 1438,185 1465,508 1470,508 1490,490 1495,500 1501,455 1516,455 1521,480 1559,628";
var upR = "10,576 38,595 58,565 95,580 100,390 163,585 200,576 237,586 247,583 289,590 299,541 335,501 346,447 466,598 477,496 550,702 582,692 638,700 665,627 712,657 733,606 796,636 812,618 822,633 838,570 848,538 895,570 910,498 921,471 951,380 957,310 966,430 974,403 982,430 987,445 1051,437 1060,560 1072,517 1156,550 1162,566 1203,565 1281,648 1318,660 1340,672 1372,675 1412,613 1422,642 1449,625 1460,642 1475,626 1501,631";
var dnL = "424,697 450,684 540,650 811,708 890,684 937,653 1187,618 1401,245 1475,405 1522,362";
var dnR = "74,504 105,445 148,445 404,630 456,605 675,614 770,665 869,550 1104,477 1115,510 1182,558 1235,600 1260,630 1507,615";
// 连续下跌的区间
var fallRange = [[62,98],[374,394],[448,466],[540,555],[700,731],[752,765],[1134,1150],[1246,1262],[1302,1345],[1640,1652],[1704,1718],[1930,1972],[2082,2102],[2178,2190],[2236,2262],[2434,2442],[2555,2563],[2696,2706],[2748,2790],[2800,2830]];

function parse(s, dx){
	return s.split(" ").map(function(p){
		var a = p.split(",");
		return [+a[0] + dx, +a[1]];
	});
}
function join(l, r){
	return parse(l, 0).concat(parse(r, HALF));
}
function line(pts, color){
	return '<polyline points="' + pts.join(" ") + '"' + (color ? ' stroke="' + color + '"' : '') + '/>';
}
function valueAt(pts, x){
	for(var i = 1; i < pts.length; i++){
		if(pts[i][0] >= x){
			var a = pts[i-1], b = pts[i];
			return a[1] + (b[1] - a[1]) * (x - a[0]) / (b[0] - a[0] || 1);
		}
	}
	return pts[pts.length-1][1];
}
function bar(x, y, up){
	if(up){
		return '<rect x="' + (x - 5) + '" y="' + y + '" width="11" height="' + (795 - y) + '" fill="#bf3a32"/>';
	}
	return '<rect x="' + (x - 1) + '" y="' + y + '" width="2.800" height="' + (795 - y) + '" fill="#4e8f35"/>';
}

document.getElementById("closeline").innerHTML = line(join(closeL, closeR));

var ma3 = join(ma3L, ma3R);
var seed = 7;
function rnd(){
	seed = (seed * 16807) % 2147483647;
	return seed / 2147483647;
}
var bars = "";
for(var i = 0; i < 587; i++){
	var x = 37 + i * 5.208;
	var falling = fallRange.some(function(r){ return x >= r[0] && x <= r[1]; });
	var up = !falling && rnd() > 0.3;
	var h = (795 - valueAt(ma3, x)) * (0.7 + 0.38 * rnd());
	if(x > 1400 && x < 1600){
		h *= 0.85;
	}
	bars += bar(x, Math.round(795 - h), up);
}
join(upL, upR).forEach(function(p){ bars += bar(p[0], p[1], true); });
join(dnL, dnR).forEach(function(p){ bars += bar(p[0], p[1], false); });
document.getElementById("volume").innerHTML = bars +
	line(join(ma1L, ma1R), "#ef9a3e") + line(join(ma2L, ma2R), "#c33cc0") + line(ma3, "#4e9a2c");
```
